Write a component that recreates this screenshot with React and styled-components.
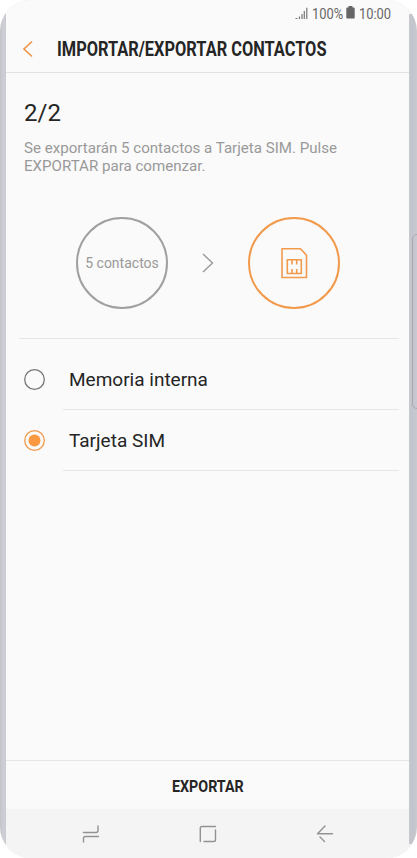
import React from "react";
import styled, { createGlobalStyle } from "styled-components";

const orange = "#f29a4c";

const GlobalStyle = createGlobalStyle`
  * { box-sizing: border-box; }
  body { margin: 0; background: #fff; font-family: Roboto, sans-serif; }
`;

const Phone = styled.div`
  position: relative;
  width: 417px;
  height: 858px;
  padding: 0 8px 0 6px;
  border-radius: 31px;
  overflow: hidden;
  background: linear-gradient(90deg, #c3c4ca 0, #cfd0d5 4px, #c8c9ce 6px, #c8c9cf 409px, #c2c4cc 412px, #c9cad0 417px);
`;

const SideKey = styled.div`
  position: absolute;
  right: -5px;
  top: 234px;
  width: 10px;
  height: 175px;
  border: 1px solid #a9aab0;
  border-radius: 5px;
`;

const CornerFill = styled.div`
  position: absolute;
  left: 0;
  right: 0;
  top: ${(p) => (p.$bottom ? "844px" : "0")};
  height: 14px;
  background: ${(p) => (p.$bottom ? "#f4f4f4" : "#fafafa")};
`;

const Screen = styled.main`
  position: relative;
  height: 858px;
  display: flex;
  flex-direction: column;
  background: #fafafa;
`;

const StatusBar = styled.div`
  height: 26px;
  padding: 0 17px 0 0;
  display: flex;
  justify-content: flex-end;
  align-items: center;
  color: #666;
`;

const Condensed = styled.span`
  display: block;
  flex: none;
  width: ${(p) => p.$width}px;
  white-space: nowrap;
  transform: scaleX(${(p) => p.$scale});
  transform-origin: left center;
`;

const StatusText = styled(Condensed)`
  font-size: 15px;
  line-height: 26px;
  padding-top: 1px;
`;

const SignalIcon = styled.svg`
  width: 13px;
  height: 13px;
  margin-right: 4px;
`;

const BatteryIcon = styled.svg`
  width: 9px;
  height: 13px;
  margin: 0 4px 1px 3px;
`;

const Header = styled.header`
  height: 47px;
  padding-left: 15px;
  display: flex;
  align-items: center;
  border-bottom: 1px solid #e2e2e2;
`;

const BackIcon = styled.svg`
  width: 14px;
  height: 18px;
  margin-right: 22px;
`;

const Title = styled(Condensed)`
  font-size: 19.5px;
  font-weight: 700;
  color: #252525;
`;

const Intro = styled.section`
  height: 144px;
  padding: 26px 18px 0;
`;

const Step = styled.h1`
  margin: 0;
  font-size: 24px;
  line-height: 28px;
  font-weight: 400;
  color: #252525;
`;

const Description = styled.p`
  margin: 12px 0 0;
  font-size: 15.1px;
  line-height: 18px;
  white-space: nowrap;
  color: #999;
`;

const Transfer = styled.section`
  height: 122px;
  margin: 0 10px 0 13px;
  padding-left: 57px;
  display: flex;
  align-items: flex-start;
  border-bottom: 1px solid #e6e6e6;
`;

const Circle = styled.div`
  width: 92px;
  height: 92px;
  display: flex;
  align-items: center;
  justify-content: center;
  border: 2px solid ${(p) => (p.$active ? orange : "#a0a0a0")};
  border-radius: 50%;
  font-size: 14px;
  white-space: nowrap;
  color: #999;
`;

const ArrowIcon = styled.svg`
  width: 12px;
  height: 20px;
  margin: 36px 34px 0;
`;

const SimIcon = styled.svg`
  width: 28px;
  height: 32px;
`;

const Options = styled.div`
  flex: 1;
  padding: 10px 10px 0 18px;
`;

const Option = styled.div`
  height: 61px;
  display: flex;
  align-items: center;
`;

const RadioIcon = styled.svg`
  flex: none;
  width: 21px;
  height: 21px;
  margin: 0 18px 1px 0;
`;

const OptionLabel = styled.div`
  flex: 1;
  height: 61px;
  padding-left: 6px;
  border-bottom: 1px solid #e6e6e6;
  font-size: 19px;
  line-height: 62px;
  color: #252525;
`;

const Footer = styled.div`
  height: 49px;
  display: flex;
  align-items: center;
  padding: 2px 0 0 166px;
  border-top: 1px solid #e6e6e6;
`;

const ExportText = styled(Condensed)`
  font-size: 16.5px;
  font-weight: 700;
  color: #252525;
`;

const NavBar = styled.nav`
  height: 49px;
  padding: 0 75px 0 76px;
  display: flex;
  align-items: center;
  justify-content: space-between;
  background: #f4f4f4;
`;

const NavIcon = styled.svg`
  width: 18px;
  height: 18px;
  fill: none;
  stroke: #929292;
  stroke-width: 1.4;
  stroke-linecap: round;
  stroke-linejoin: round;
`;

function Radio({ checked }) {
  return (
    <RadioIcon viewBox="0 0 21 21" fill="none">
      <circle cx="10.5" cy="10.5" r="9.8" stroke={checked ? orange : "#777"} strokeWidth="1.3" />
      {checked && <circle cx="10.5" cy="10.5" r="6" fill="#fa9941" />}
    </RadioIcon>
  );
}

export default function App() {
  return (
    <>
      <GlobalStyle />
      <Phone>
        <SideKey />
        <CornerFill />
        <CornerFill $bottom />
        <Screen>
          <StatusBar>
            <SignalIcon viewBox="0 0 13 13" stroke="#777" strokeWidth="1.2">
              <path d="M.5 11.5h2M4.5 12v-2.500M7 12V7M9.300 12V4M11.800 12V.8" />
            </SignalIcon>
            <StatusText $width={31} $scale={0.86}>100%</StatusText>
            <BatteryIcon viewBox="0 0 9 13">
              <path d="M2.5 0h4v1.5H8q.7 0 .7.7v9.6q0 .7-.7.7H1q-.7 0-.7-.7V2.2q0-.7.7-.7h1.5z" fill="#666" />
            </BatteryIcon>
            <StatusText $width={33} $scale={0.86}>10:00</StatusText>
          </StatusBar>
          <Header>
            <BackIcon viewBox="0 0 14 18" fill="none" stroke="#ef964a" strokeWidth="1.7">
              <path d="M11 1.5 3 9l8 7.5" />
            </BackIcon>
            <Title $width={269} $scale={0.84}>IMPORTAR/EXPORTAR CONTACTOS</Title>
          </Header>
          <Intro>
            <Step>2/2</Step>
            <Description>
              Se exportarán 5 contactos a Tarjeta SIM. Pulse
              <br />
              EXPORTAR para comenzar.
            </Description>
          </Intro>
          <Transfer>
            <Circle>5 contactos</Circle>
            <ArrowIcon viewBox="0 0 12 20" fill="none" stroke="#999" strokeWidth="1.4">
              <path d="M1 1l9.5 9L1 19" />
            </ArrowIcon>
            <Circle $active>
              <SimIcon viewBox="0 0 28 32" fill="none" stroke={orange} strokeWidth="1.6" strokeLinejoin="round">
                <path d="M2 1.8h18.5l6 6.5v22.2H2z" />
                <rect x="7.3" y="12.8" width="14" height="13.7" />
                <path d="M12 13v4.5M16.700 13v4.500M12 26.500v-4.500M16.700 26.500v-4.500" />
              </SimIcon>
            </Circle>
          </Transfer>
          <Options>
            <Option>
              <Radio />
              <OptionLabel>Memoria interna</OptionLabel>
            </Option>
            <Option>
              <Radio checked />
              <OptionLabel>Tarjeta SIM</OptionLabel>
            </Option>
          </Options>
          <Footer>
            <ExportText $width={73} $scale={0.865}>EXPORTAR</ExportText>
          </Footer>
          <NavBar>
            <NavIcon viewBox="0 0 18 18">
              <path d="M1.500 7.500H14q2 0 2-2V1M1.500 17v-3.500q0-2 2-2H16.500" />
            </NavIcon>
            <NavIcon viewBox="0 0 18 18">
              <path d="M1.300 16.500V3q0-1.500 1.500-1.500H16.500M16.500 5v10q0 1.500-1.500 1.500H5" />
            </NavIcon>
            <NavIcon viewBox="0 0 18 18">
              <path d="M9 1 1.500 8.700H16.500M4 12l4.500 4.500" />
            </NavIcon>
          </NavBar>
        </Screen>
      </Phone>
    </>
  );
}
